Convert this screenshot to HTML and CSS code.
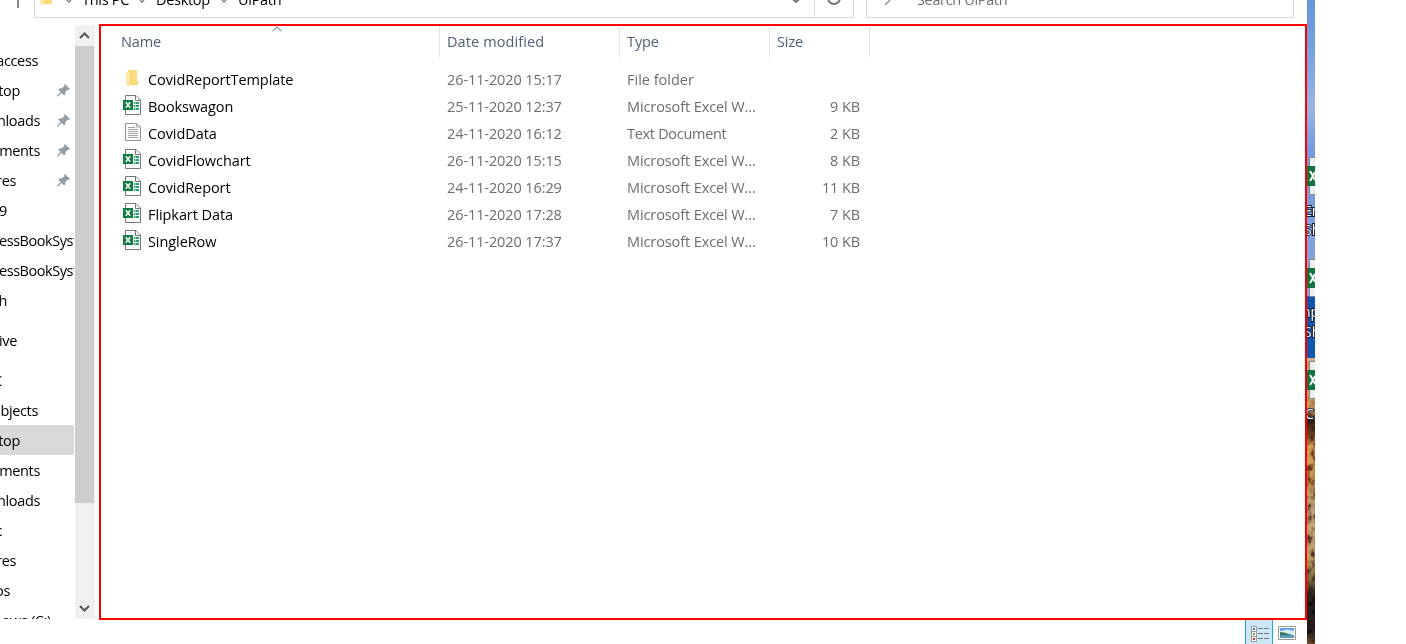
FILE: index.html
```html
<!DOCTYPE html>
<html lang="en">
<head>
<meta charset="utf-8">
<title>UiPath</title>
<link rel="stylesheet" href="styles.css">
</head>
<body>
<svg width="0" height="0" class="defs">
  <symbol id="pin" viewBox="0 0 13 13"><path d="M8 0 13 5 12 6 11 5.500 8.500 8 8.300 10.500 7.200 11.500 4.600 9 .8 12.600 0 12.600 0 11.800 3.600 8 1.200 5.500 2.300 4.500 4.800 4.300 7.500 2 7 1Z" fill="#939da6"/></symbol>
  <symbol id="folder" viewBox="0 0 12 17"><path d="M2 0H11V10.500H12V15H2Z" fill="#f8d775"/><path d="M7 0h4v10L7 14Z" fill="#fbdc83"/><path d="M0 1 4 3.500V17L0 15Z" fill="#ffe9a9"/></symbol>
  <symbol id="excel" viewBox="0 0 18 20"><path d="M2.500.5H13L17.500 5V19.500H2.500Z" fill="#fff" stroke="#777"/><path d="M12.500.5V5.500H17.500" fill="none" stroke="#777"/><path d="M11 7h1.500v2H11zM11 10h1.500v2H11zM11 13h1.500v2H11zM13 7h3v2h-3zM13 10h3v2h-3zM13 13h3v2h-3z" fill="#21a366"/><path d="M0 5h10v10H0Z" fill="#107c41"/><path d="M2.800 7.200 7.200 12.800M7.200 7.200 2.800 12.800" stroke="#fff" stroke-width="1.500"/></symbol>
  <symbol id="text" viewBox="0 0 16 18"><path d="M.5.5H11.500L15.500 4V17.500H.5Z" fill="#fafafa" stroke="#969696"/><path d="M11.500.5V4H15.500M3 4.500H10M3 6.500H13M3 8.500H13M3 10.500H13M3 12.500H13M3 14.500H13" fill="none" stroke="#a6a6a6"/></symbol>
</svg>
<div class="screen">
  <div class="window">
    <header class="topbar">
      <span class="up"></span>
      <div class="address">
        <svg class="crumb-folder" width="12" height="17"><use href="#folder"/></svg>
        <svg class="sep s1" width="8" height="8"><path d="M2 0 4 2 6 0" fill="none" stroke="#777" stroke-width="1.300"/></svg>
        <span class="crumb c1">This PC</span>
        <svg class="sep s2" width="8" height="8"><path d="M2 0 4 2 6 0" fill="none" stroke="#777" stroke-width="1.300"/></svg>
        <span class="crumb c2">Desktop</span>
        <svg class="sep s3" width="8" height="8"><path d="M2 0 4 2 6 0" fill="none" stroke="#777" stroke-width="1.300"/></svg>
        <span class="crumb c3">UiPath</span>
        <svg class="drop" width="10" height="8"><path d="M1 -1.500 5 2 9 -1.500" fill="none" stroke="#777" stroke-width="2"/></svg>
        <span class="refresh"><svg width="16" height="16"><circle cx="8" cy="8" r="6" fill="none" stroke="#777" stroke-width="2"/></svg></span>
      </div>
      <div class="search">
        <svg width="16" height="16"><path d="M1 15 7 9" stroke="#888" fill="none" stroke-width="1.300"/><circle cx="10" cy="5" r="4.500" fill="none" stroke="#888" stroke-width="1.300"/></svg>
        <span>Search UiPath</span>
      </div>
    </header>
    <div class="main">
      <nav class="side">
        <ul>
          <li><span class="w38">access</span></li>
          <li><span class="w20">top</span><svg width="13" height="13"><use href="#pin"/></svg></li>
          <li><span class="w40">nloads</span><svg width="13" height="13"><use href="#pin"/></svg></li>
          <li><span class="w40">ments</span><svg width="13" height="13"><use href="#pin"/></svg></li>
          <li><span class="w16">res</span><svg width="13" height="13"><use href="#pin"/></svg></li>
          <li><span class="w7">9</span></li>
          <li><span class="long">essBookSyst</span></li>
          <li><span class="long">essBookSyst</span></li>
          <li><span class="w7">h</span></li>
          <li class="group"><span class="w17">ive</span></li>
          <li class="group"><span class="w3">C</span></li>
          <li><span class="w38">bjects</span></li>
          <li class="selected"><span class="w20">top</span></li>
          <li><span class="w40">ments</span></li>
          <li><span class="w40">nloads</span></li>
          <li><span class="w3">c</span></li>
          <li><span class="w16">res</span></li>
          <li><span class="w10">os</span></li>
          <li><span class="w51">ows (C:)</span></li>
        </ul>
        <div class="scroll">
          <svg width="19" height="21"><path d="M5 13 9.500 8.500 14 13" fill="none" stroke="#555" stroke-width="2"/></svg>
          <div class="thumb"></div>
          <svg class="down" width="19" height="21"><path d="M5 8 9.500 12.500 14 8" fill="none" stroke="#555" stroke-width="2"/></svg>
        </div>
      </nav>
      <section class="files">
        <div class="row head">
          <span>Name<svg class="sort" width="10" height="6"><path d="M.5 5 5 .8 9.500 5" fill="none" stroke="#666"/></svg></span><span class="wide">Date modified</span><span>Type</span><span>Size</span>
        </div>
        <div class="row"><span class="name"><svg class="fold" width="12" height="17"><use href="#folder"/></svg><b>CovidReportTemplate</b></span><span class="date">26-11-2020 15:17</span><span class="kind folder">File folder</span><span class="size"></span></div>
        <div class="row"><span class="name"><svg width="18" height="20"><use href="#excel"/></svg><b>Bookswagon</b></span><span class="date">25-11-2020 12:37</span><span class="kind">Microsoft Excel W...</span><span class="size">9 KB</span></div>
        <div class="row"><span class="name"><svg class="txt" width="16" height="18"><use href="#text"/></svg><b>CovidData</b></span><span class="date">24-11-2020 16:12</span><span class="kind document">Text Document</span><span class="size">2 KB</span></div>
        <div class="row"><span class="name"><svg width="18" height="20"><use href="#excel"/></svg><b>CovidFlowchart</b></span><span class="date">26-11-2020 15:15</span><span class="kind">Microsoft Excel W...</span><span class="size">8 KB</span></div>
        <div class="row"><span class="name"><svg width="18" height="20"><use href="#excel"/></svg><b>CovidReport</b></span><span class="date">24-11-2020 16:29</span><span class="kind">Microsoft Excel W...</span><span class="size">11 KB</span></div>
        <div class="row"><span class="name"><svg width="18" height="20"><use href="#excel"/></svg><b>Flipkart Data</b></span><span class="date">26-11-2020 17:28</span><span class="kind">Microsoft Excel W...</span><span class="size">7 KB</span></div>
        <div class="row"><span class="name"><svg width="18" height="20"><use href="#excel"/></svg><b>SingleRow</b></span><span class="date">26-11-2020 17:37</span><span class="kind">Microsoft Excel W...</span><span class="size">10 KB</span></div>
      </section>
    </div>
    <footer class="status">
      <span class="view active"><svg width="18" height="16"><path d="M.5.5h5v15h-5zM.5 5.500h5M.5 10.500h5" fill="#fff" stroke="#999"/><path d="M2 2h2v2H2z" fill="#2f7fc0"/><path d="M2 7h2v2H2z" fill="#879633"/><path d="M2 12h2v2H2z" fill="#b8321b"/><path d="M7 2.500h5M13 2.500h5M7 7.500h5M13 7.500h5M7 12.500h5M13 12.500h5" stroke="#777"/></svg></span>
      <span class="view"><svg width="18" height="14"><path d="M.5.5h17v13H.5z" fill="#fff" stroke="#999"/><path d="M2 2h14v10H2z" fill="#5e9fe6"/><path d="M2 5 9 3.500 16 5V9H2Z" fill="#d9edf7"/><path d="M2 6 6 6.500 16 9.500H2Z" fill="#3d7562"/><path d="M2 9.500h14V12H2z" fill="#5b9fc0"/></svg></span>
    </footer>
  </div>
  <svg class="desktop" width="8" height="644" viewBox="0 0 8 644">
    <defs>
      <linearGradient id="sky" x2="0" y2="1"><stop offset="0" stop-color="#6695d9"/><stop offset=".18" stop-color="#7aa3e2"/><stop offset=".36" stop-color="#9bb4e2"/><stop offset=".5" stop-color="#7499dd"/><stop offset="1" stop-color="#8aa4da"/></linearGradient>
      <linearGradient id="rock" x2="0" y2="1"><stop offset="0" stop-color="#c8a078"/><stop offset=".17" stop-color="#a87747"/><stop offset=".22" stop-color="#2c1a10"/><stop offset=".27" stop-color="#4a2e18"/><stop offset=".31" stop-color="#a86f39"/><stop offset=".43" stop-color="#99683a"/><stop offset=".52" stop-color="#907456"/><stop offset=".7" stop-color="#8d7048"/><stop offset=".77" stop-color="#5c4c2c"/><stop offset=".83" stop-color="#1f1713"/><stop offset=".94" stop-color="#1b1515"/><stop offset="1" stop-color="#49331f"/></linearGradient>
      <filter id="grain" x="0" y="0" width="1" height="1"><feTurbulence type="fractalNoise" baseFrequency=".2 .14" numOctaves="3" seed="7"/><feColorMatrix values="2.400 0 0 0 -.7  2.400 0 0 0 -.7  2.400 0 0 0 -.7  0 0 0 0 .5"/></filter>
      <g id="tile"><path d="M2.500.5H9V37.500H2.500Z" fill="#eee" stroke="#888"/><path d="M0 9h8v20H0Z" fill="#0f7440"/><path d="M3 14 6 19 3 24M8 15 6 19 8 23" fill="none" stroke="#f4f4f4" stroke-width="2"/></g>
    </defs>
    <rect width="8" height="300" fill="url(#sky)"/>
    <rect y="296" width="8" height="62" fill="#1157ad"/>
    <rect y="358" width="8" height="286" fill="url(#rock)"/>
    <rect class="texture" y="358" width="8" height="286" filter="url(#grain)"/>
    <use href="#tile" y="157"/><use href="#tile" y="259"/><use href="#tile" y="361"/>
    <g class="labels"><text x="-3" y="216">En</text><text x="-3" y="235">Sh</text><text x="-5" y="317">np</text><text x="-3" y="337">Sh</text><text x="-2" y="419">C</text></g>
  </svg>
</div>
</body>
</html>
```
FILE: styles.css
```css
* { box-sizing: border-box; }
body { margin: 0; background: #fff; font: 14.5px/20px "Open Sans", "Noto Sans", sans-serif; color: #000; overflow: hidden; }
svg { display: block; flex: none; }
.defs { position: absolute; }
.screen { display: flex; width: 1406px; height: 644px; }
.window { display: flex; flex-direction: column; width: 1307px; height: 644px; }
.desktop { overflow: hidden; }
.texture { mix-blend-mode: overlay; }
.labels { font-size: 14px; fill: #fff; stroke: #17243d; stroke-width: 2px; paint-order: stroke; }

.topbar { display: flex; height: 24px; overflow: hidden; }
.up { width: 2px; height: 8px; margin-left: 17px; background: #888; }
.address, .search { display: flex; align-items: center; height: 36px; margin-top: -18px; border: 1px solid #d9d9d9; white-space: nowrap; }
.address { width: 820px; margin-left: 15px; }
.search { width: 428px; margin-left: 12px; padding-left: 17px; color: #6d6d6d; gap: 17px; }
.search span { margin-top: -1px; letter-spacing: -.35px; }
.search svg { margin-top: -5px; }
.crumb-folder { margin: -6px 14px 0 5px; }
.sep { margin-top: 7px; }
.s1 { margin-left: -1px; }
.crumb { margin-top: -1px; letter-spacing: -.3px; }
.c1 { width: 51px; margin-left: 9px; }
.s2 { margin-left: 5px; }
.c2 { width: 56px; margin-left: 10px; }
.s3 { margin-left: 8px; }
.c3 { margin-left: 10px; }
.drop { margin: 7px 13px 0 auto; }
.refresh { display: grid; place-items: center; width: 39px; height: 34px; border-left: 1px solid #d9d9d9; }
.refresh svg { margin-top: -4px; }

.main { display: flex; height: 596px; }
.side { display: flex; width: 99px; height: 595px; overflow: hidden; }
.side ul { width: 75px; height: 595px; margin: 0; padding: 21px 1px 0 0; list-style: none; overflow: hidden; }
.side li { display: flex; align-items: center; justify-content: space-between; height: 30px; padding-right: 4px; }
.side li span { display: flex; justify-content: flex-end; margin-top: 2px; letter-spacing: -.35px; white-space: nowrap; }
.side li.group { margin-top: 10px; }
.side li.selected { background: #d9d9d9; }
.w38 { width: 38px; } .w20 { width: 20px; } .w40 { width: 40px; } .w16 { width: 16px; }
.w7 { width: 7px; } .w17 { width: 17px; } .w3 { width: 2px; } .w10 { width: 10px; } .w51 { width: 51px; }
.side li .long { width: 75px; justify-content: flex-start; margin: 2px -4px 0 -1px; letter-spacing: -.45px; overflow: hidden; }
.scroll { display: flex; flex-direction: column; width: 20px; margin-top: 1px; background: #f0f0f0; }
.thumb { width: 19px; height: 457px; background: #cdcdcd; }
.down { margin-top: auto; }

.files { width: 1208px; height: 596px; border: 2px solid #f00; }
.row { display: grid; grid-template-columns: 339px 180px 150px 100px; height: 27px; align-items: center; color: #6d6d6d; white-space: nowrap; }
.head { height: 32px; margin-bottom: 8px; color: #4c607a; letter-spacing: -.1px; }
.head span { position: relative; height: 31px; margin-bottom: 1px; padding: 6px 0 0 7px; border-right: 1px solid #e5e5e5; }
.head span:first-child { padding-left: 20px; }
.head .wide { letter-spacing: .1px; }
.sort { position: absolute; left: 171px; top: 0; }
.name { display: flex; align-items: center; padding-left: 22px; color: #000; }
.name svg { margin: -3px 7px 0 0; }
.name .fold { margin: -3px 10px 0 3px; }
.name .txt { margin: -3px 7px 0 2px; }
.name b { font-weight: 400; letter-spacing: -.08px; }
.date, .kind { padding-left: 7px; letter-spacing: -.1px; }
.kind.folder { letter-spacing: 0; }
.kind.document { letter-spacing: -.3px; }
.size { padding-right: 10px; text-align: right; letter-spacing: -.1px; }

.status { display: flex; justify-content: flex-end; height: 24px; }
.view { display: flex; width: 28px; height: 24px; padding: 6px 0 0 5px; }
.view + .view { width: 34px; padding-left: 5px; }
.active { border: solid #26a0da; border-width: 0 1px; background: #cce8f6; }
```
